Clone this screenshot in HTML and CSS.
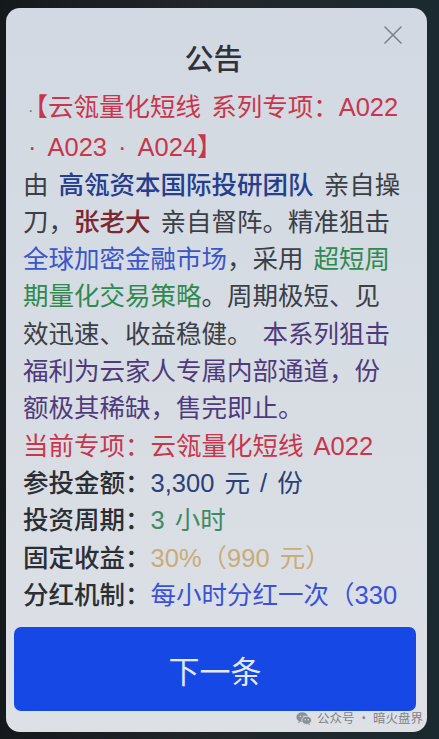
FILE: index.html
```html
<!DOCTYPE html>
<html lang="zh-CN">
<head>
<meta charset="utf-8">
<title>公告</title>
<link rel="stylesheet" href="styles.css">
</head>
<body>
<div class="card">
  <div class="header">
    <h1 class="title">公告</h1>
    <button class="close" aria-label="关闭">
      <svg viewBox="0 0 20 20" width="20" height="20"><path d="M2 2 L18 18 M18 2 L2 18" stroke="#7d8288" stroke-width="1.6" fill="none" stroke-linecap="round"/></svg>
    </button>
  </div>
  <div class="content">
    <p class="text"><span class="bullet">·</span><span class="red">【云瓴量化短线 系列专项：A022</span><br><span class="red"><span class="dot first">·</span>A023<span class="dot">·</span>A024】</span><br><span class="dark">由 </span><span class="navy">高瓴资本国际投研团队</span><span class="dark"> 亲自操</span><br><span class="dark">刀，</span><span class="darkred">张老大</span><span class="dark"> 亲自督阵。精准狙击</span><br><span class="blue">全球加密金融市场</span><span class="dark">，采用 </span><span class="green">超短周</span><br><span class="green">期量化交易策略</span><span class="dark">。周期极短、见</span><br><span class="dark">效迅速、收益稳健。</span><span class="purple"> 本系列狙击</span><br><span class="purple">福利为云家人专属内部通道，份</span><br><span class="purple">额极其稀缺，售完即止。</span><br><span class="red">当前专项：云瓴量化短线 A022</span><br><span class="label">参投金额：</span><span class="v-navy">3,300 元 / 份</span><br><span class="label">投资周期：</span><span class="v-green">3 小时</span><br><span class="label">固定收益：</span><span class="v-tan">30%（990 元）</span><br><span class="label">分红机制：</span><span class="v-blue">每小时分红一次（330</span></p>
  </div>
  <button class="next">下一条</button>
  <div class="watermark">
    <svg class="wx" viewBox="0 0 18 16" width="16" height="15"><ellipse cx="7" cy="6.5" rx="6.5" ry="5.5" fill="#8a8f95"/><path d="M3 11 L2.5 13.5 L5.5 11.5 Z" fill="#8a8f95"/><ellipse cx="12" cy="10" rx="5.5" ry="4.6" fill="#8a8f95" stroke="#dde1e6" stroke-width="1"/><path d="M15 13.5 L16 15.5 L13 14.2 Z" fill="#8a8f95"/><circle cx="5" cy="5.5" r="0.9" fill="#dde1e6"/><circle cx="9" cy="5.5" r="0.9" fill="#dde1e6"/><circle cx="10.3" cy="9.5" r="0.8" fill="#dde1e6"/><circle cx="13.7" cy="9.5" r="0.8" fill="#dde1e6"/></svg>
    <span>公众号<span class="wdot">·</span>暗火盘界</span>
  </div>
</div>
</body>
</html>
```
FILE: styles.css
```css
html, body {
  margin: 0;
  padding: 0;
}
body {
  width: 439px;
  height: 739px;
  overflow: hidden;
  background: linear-gradient(90deg, #16191c 0%, #22272b 50%, #1b2a30 100%);
  font-family: "Liberation Sans", "Noto Sans CJK SC", sans-serif;
}
.card {
  position: relative;
  box-sizing: border-box;
  width: 421px;
  height: 724px;
  margin: 8px 0 0 6px;
  padding: 29px 0 0 0;
  border-radius: 14px;
  background: linear-gradient(180deg, #d2d9e2 0%, #d8dde4 60%, #dde1e6 100%);
  display: flex;
  flex-direction: column;
}
.header {
  position: relative;
  height: 40px;
}
.title {
  margin: 0 6px 0 0;
  text-align: center;
  font-family: "Noto Sans CJK SC", sans-serif;
  font-size: 29px;
  line-height: 40px;
  font-weight: 500;
  color: #2f3338;
}
.close {
  position: absolute;
  right: 24px;
  top: -12px;
  width: 20px;
  height: 20px;
  padding: 0;
  border: 0;
  background: none;
}
.close svg {
  display: block;
}
.content {
  margin-top: 12px;
  padding-left: 17px;
  height: 522px;
  overflow: hidden;
}
.text {
  margin: 0;
  font-size: 25.5px;
  line-height: 37.3px;
  word-spacing: 3px;
  white-space: nowrap;
  color: #3b4046;
}
.bullet {
  color: #70757b;
  font-size: 16px;
  margin-left: 5px;
  margin-right: 2px;
}
.dot {
  margin: 0 11px;
}
.dot.first {
  margin-left: 5px;
  margin-right: 11px;
}
.red { color: #c8364e; }
.dark { color: #3b4046; }
.navy { color: #253e8e; font-weight: 500; }
.darkred { color: #7d2730; font-weight: 500; }
.blue { color: #3c55c8; }
.green { color: #2f8a4f; }
.purple { color: #4e3b7c; }
.label { color: #2b2f33; font-weight: 500; }
.v-navy { color: #2c3f78; }
.v-green { color: #3f8a62; }
.v-tan { color: #c9ac78; }
.v-blue { color: #3c52d6; }
.next {
  margin: 16px 11px 0 8px;
  height: 84px;
  border: 0;
  border-radius: 7px;
  background: #1648e6;
  color: #e3e9f6;
  font-family: "Noto Sans CJK SC", sans-serif;
  font-size: 31px;
  padding: 0;
}
.watermark {
  position: absolute;
  right: 4px;
  bottom: 5px;
  display: flex;
  align-items: center;
  gap: 5px;
  color: #7e8389;
  font-family: "Noto Sans CJK SC", sans-serif;
  font-size: 12.5px;
  line-height: 18px;
}
.wdot {
  margin: 0 3px;
}
.wx {
  display: block;
}
```
